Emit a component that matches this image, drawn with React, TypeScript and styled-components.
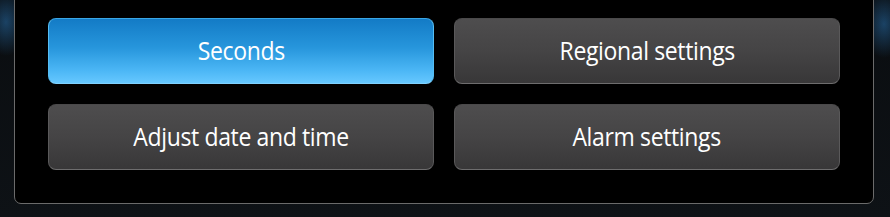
import React from "react";
import styled, { createGlobalStyle } from "styled-components";

const Global = createGlobalStyle`
  html, body { margin: 0; padding: 0; }
  body {
    width: 890px;
    height: 217px;
    overflow: hidden;
    background: #0b0e11;
  }
`;

const Screen = styled.div`
  position: relative;
  width: 890px;
  height: 217px;
  box-sizing: border-box;
  padding: 0 16px 13px 14px;
  background:
    radial-gradient(ellipse 22px 34px at 6px 22px, rgba(40, 110, 170, 0.55), rgba(20, 60, 100, 0) 100%),
    radial-gradient(ellipse 22px 34px at 884px 24px, rgba(40, 110, 170, 0.55), rgba(20, 60, 100, 0) 100%),
    linear-gradient(180deg, #0a0d10 0%, #0e1216 100%);
  display: flex;
`;

const Panel = styled.div`
  flex: 1;
  box-sizing: border-box;
  margin-top: -10px;
  padding: 27px 33px 33px 33px;
  background: #000;
  border: 1px solid #6b6b6b;
  border-radius: 0 0 7px 7px;
  display: grid;
  grid-template-columns: 386px 386px;
  grid-template-rows: 66px 66px;
  column-gap: 20px;
  row-gap: 20px;
`;

const Button = styled.button<{ $active?: boolean }>`
  box-sizing: border-box;
  margin: 0;
  padding: 0 0 3px 0;
  border-radius: 8px;
  font-family: "Open Sans", "Noto Sans", sans-serif;
  font-size: 25px;
  letter-spacing: -0.4px;
  color: #ffffff;
  cursor: pointer;
  display: flex;
  align-items: center;
  justify-content: center;
  border: 1px solid ${(p) => (p.$active ? "#55bdf3" : "#5a595a")};
  border-top-color: ${(p) => (p.$active ? "#3aa6e6" : "#4a494a")};
  border-bottom-color: ${(p) => (p.$active ? "#7fd2ff" : "#6e6d6e")};
  background: ${(p) =>
    p.$active
      ? "linear-gradient(180deg, #137bc6 0%, #2796dc 45%, #4bb6f5 80%, #66c8ff 100%)"
      : "linear-gradient(180deg, #4e4d4e 0%, #454445 50%, #383738 100%)"};
`;

const Label = styled.span`
  display: inline-block;
  transform: scaleX(0.92);
`;

const items = [
  { label: "Seconds", active: true },
  { label: "Regional settings" },
  { label: "Adjust date and time" },
  { label: "Alarm settings" },
];

export default function App() {
  return (
    <>
      <Global />
      <Screen>
        <Panel>
          {items.map((it) => (
            <Button key={it.label} $active={it.active}>
              <Label>{it.label}</Label>
            </Button>
          ))}
        </Panel>
      </Screen>
    </>
  );
}
